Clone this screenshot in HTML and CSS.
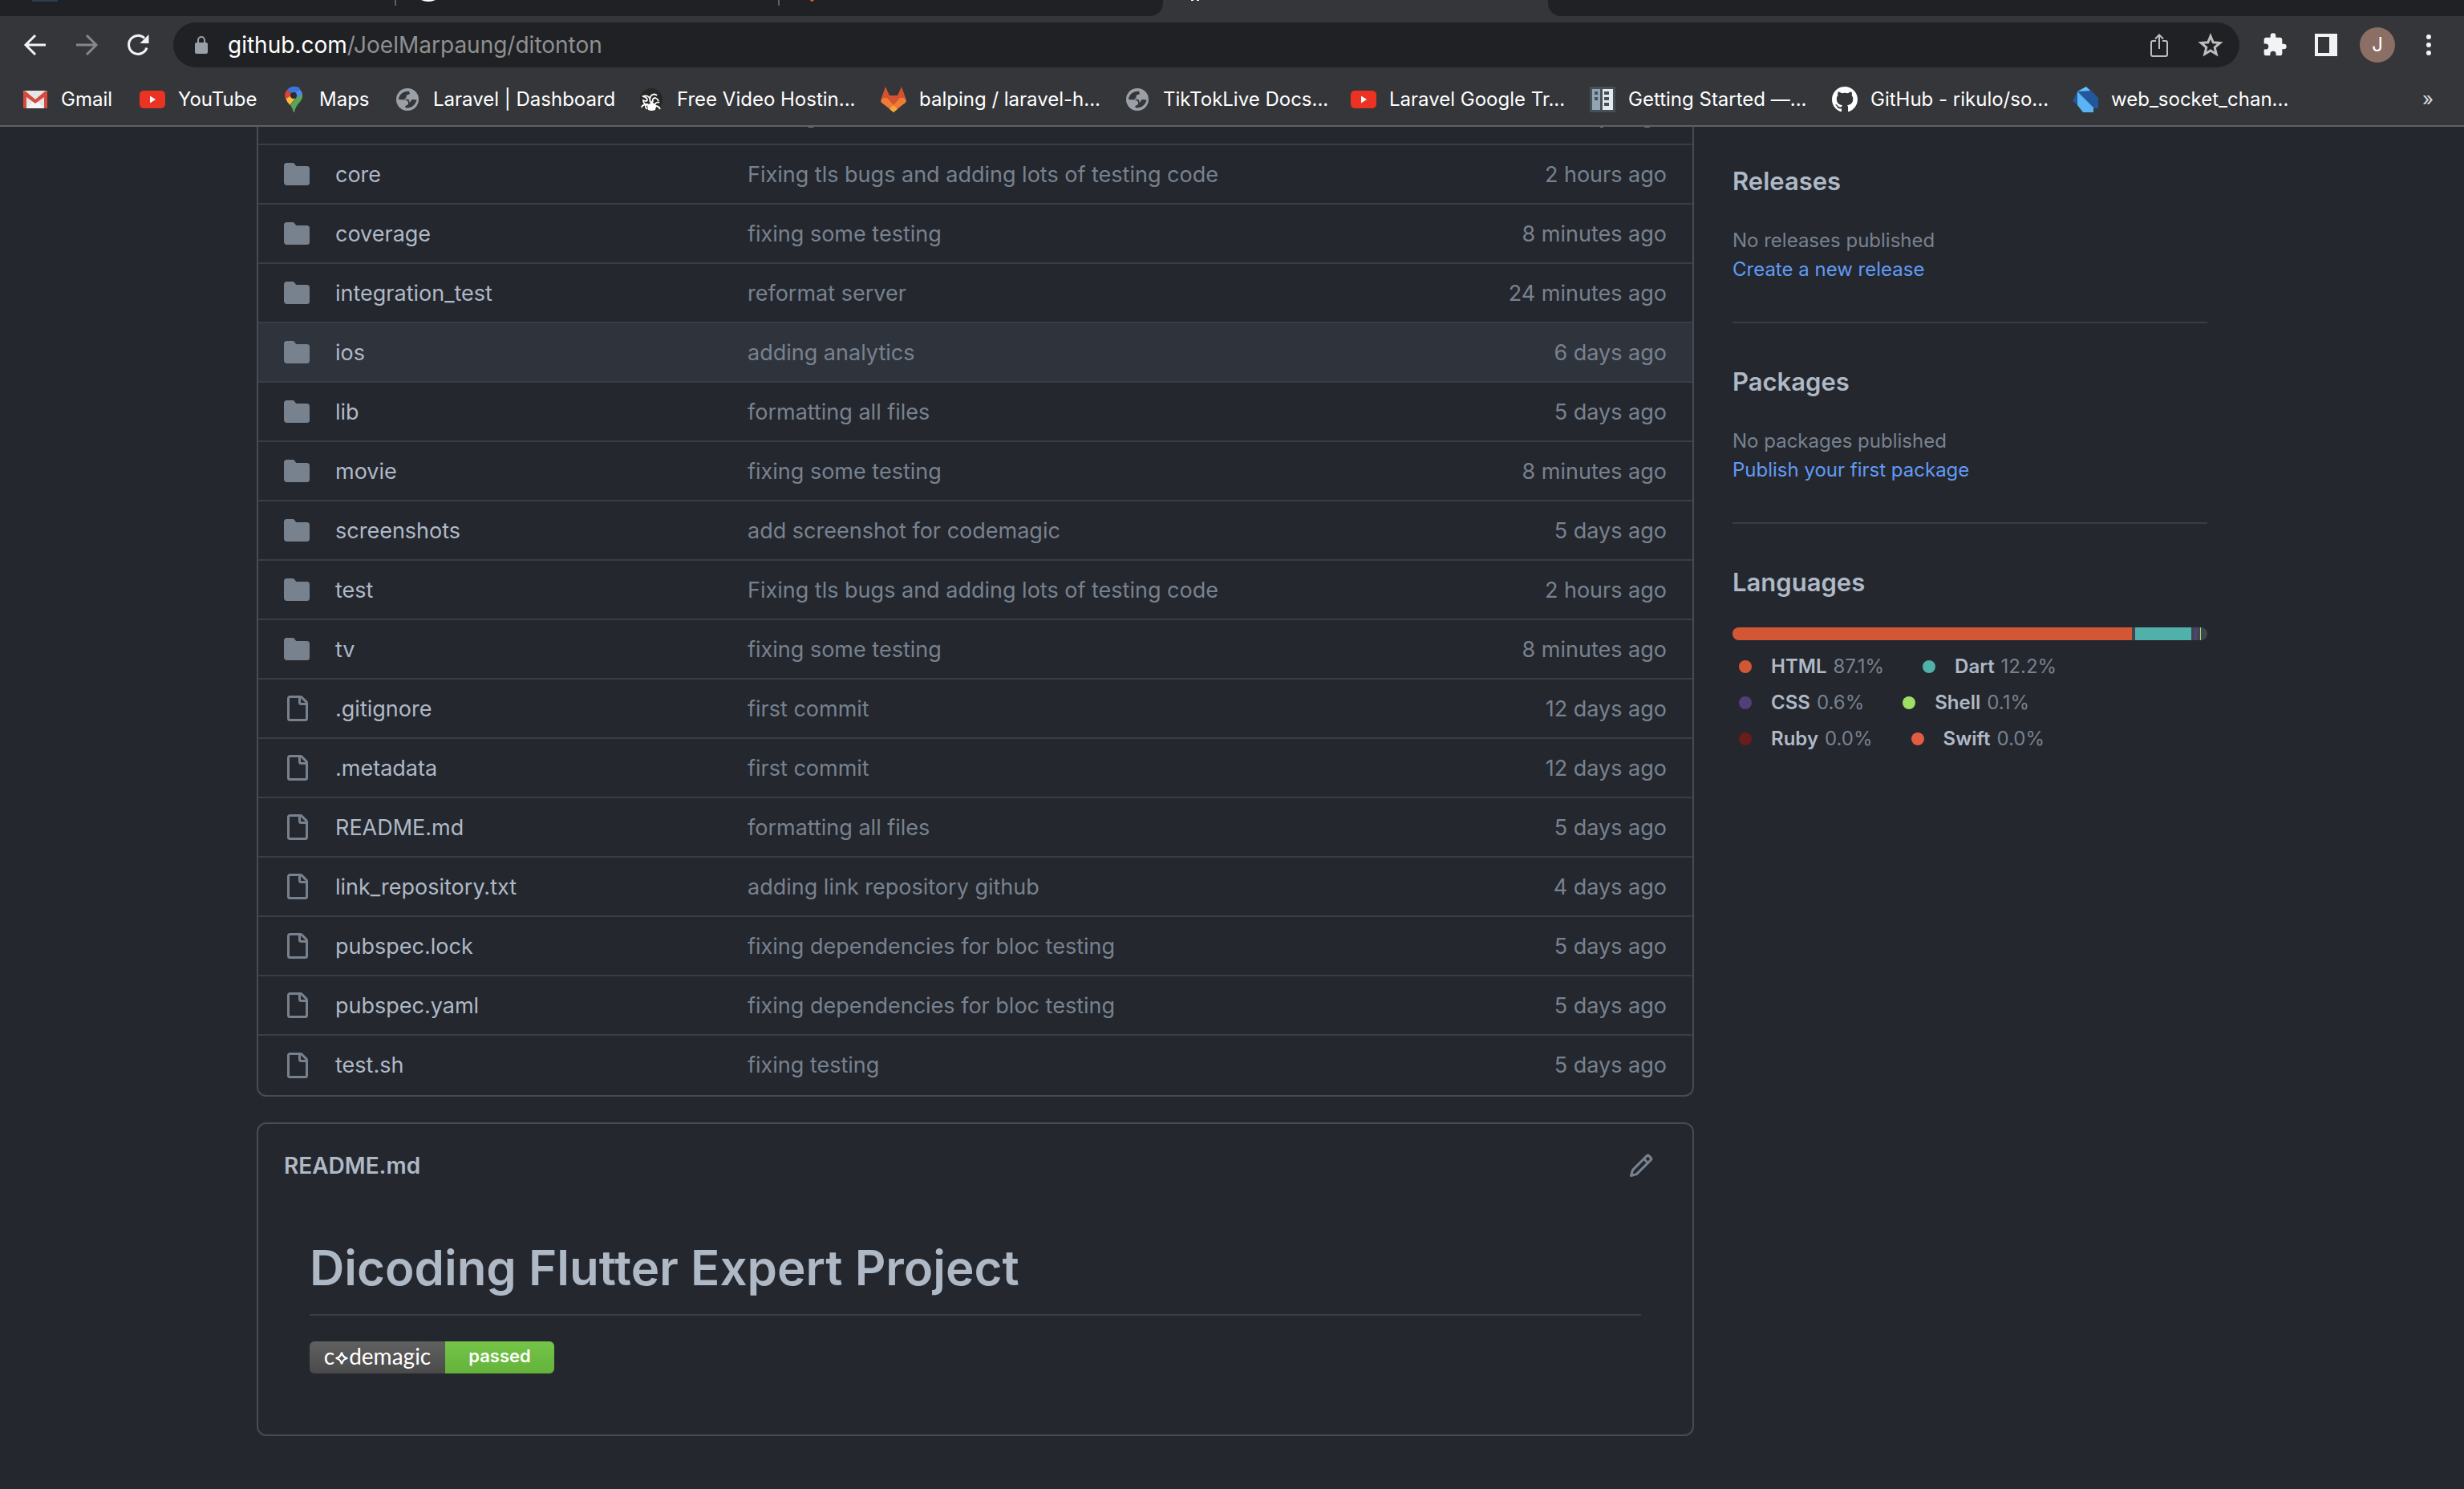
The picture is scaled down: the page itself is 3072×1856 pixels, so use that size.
FILE: index.html
```html
<!DOCTYPE html>
<html lang="en">
<head>
<meta charset="utf-8">
<title>JoelMarpaung/ditonton</title>
<link rel="stylesheet" href="styles.css">
</head>
<body>
<svg class="sprite" aria-hidden="true">
  <symbol id="folder" viewBox="0 0 16 16"><path d="M1.75 1A1.75 1.75 0 000 2.75v10.5C0 14.216.784 15 1.75 15h12.5A1.75 1.75 0 0016 13.25v-8.5A1.75 1.75 0 0014.25 3h-6.5a.25.25 0 01-.2-.1l-.9-1.2c-.33-.44-.85-.7-1.4-.7h-3.5z"/></symbol>
  <symbol id="file" viewBox="0 0 16 16"><path fill-rule="evenodd" d="M2 1.75C2 .784 2.784 0 3.75 0h6.586c.464 0 .909.184 1.237.513l2.914 2.914c.329.328.513.773.513 1.237v9.586A1.75 1.75 0 0113.25 16h-9.5A1.75 1.75 0 012 14.25V1.75zm1.75-.25a.25.25 0 00-.25.25v12.5c0 .138.112.25.25.25h9.5a.25.25 0 00.25-.25V6h-2.75A1.75 1.75 0 019 4.25V1.5H3.75zm6.75.062V4.25c0 .138.112.25.25.25h2.688a.252.252 0 00-.011-.013l-2.914-2.914a.272.272 0 00-.013-.011z"/></symbol>
  <symbol id="globe" viewBox="0 0 32 32"><circle cx="16" cy="16" r="14" fill="#9aa0a6"/><path d="M5 16C5.500 10 10 5.500 18 5.800l1 3.200-4.500 2v3l-3 1.500 6 .5 1.500 4 2.500-4 6 .5C26 23 21 27 14 26.500L13 24.500l4-2.500v-3l-3-2.500z" fill="#35363a"/></symbol>
  <symbol id="youtube" viewBox="0 0 32 32"><rect y="5" width="32" height="22" rx="5" fill="#eb3223"/><path d="M13 11.500v9l7-4.500z" fill="#fff"/></symbol>
</svg>

<header class="browser">
  <div class="tabs">
    <div class="tab tab-first"><svg class="favicon" viewBox="0 0 32 6"><path d="M0 0h32v2H0z" fill="#2c3e50"/></svg></div>
    <div class="tab"><svg class="favicon" viewBox="0 0 32 6"><path d="M7 0q9 4 18 0z" fill="#fff"/></svg></div>
    <div class="tab tab-before"><svg class="favicon" viewBox="0 0 32 6"><path d="M14 0q2 4 5 0z" fill="#f05138"/></svg></div>
    <div class="tab tab-active"><svg class="favicon" viewBox="0 0 32 6"><path d="M11 0h3v1h-3zM18 0h3v1h-3z" fill="#fff"/></svg></div>
    <div class="tabs-rest"></div>
  </div>
  <div class="toolbar">
    <button class="tool" aria-label="Back"><svg viewBox="0 0 32 32"><path d="M29 16H5M16 4L4 16l12 12" fill="none" stroke="#f1f3f4" stroke-width="3"/></svg></button>
    <button class="tool" aria-label="Forward"><svg viewBox="0 0 32 32"><path d="M3 16h24M16 4l12 12-12 12" fill="none" stroke="#84868a" stroke-width="3"/></svg></button>
    <button class="tool" aria-label="Reload"><svg viewBox="0 0 32 32"><path d="M27 19.500A11.500 11.500 0 1 1 24 7.500" fill="none" stroke="#f1f3f4" stroke-width="3"/><path d="M29.500 3v11h-11z" fill="#f1f3f4"/></svg></button>
    <div class="omnibox">
      <svg class="lock" viewBox="0 0 18 22"><rect x="1" y="8" width="16" height="14" rx="2" fill="#9aa0a6"/><path d="M5 9V5a4 4 0 0 1 8 0v4" fill="none" stroke="#9aa0a6" stroke-width="2"/></svg>
      <a class="url" href="#"><b>github.com</b>/JoelMarpaung/ditonton</a>
      <button class="tool" aria-label="Share"><svg viewBox="0 0 32 32"><path d="M12 11H8q-2 0-2 2v15q0 2 2 2h16q2 0 2-2V13q0-2-2-2h-4M16 21V4M11 8.500l5-5 5 5" fill="none" stroke="#bdbdbd" stroke-width="2"/></svg></button>
      <button class="tool" aria-label="Bookmark"><svg viewBox="0 0 32 32"><path d="M16 5l3.200 7.800 8.600.7-6.600 5.500 2 8.400-7.200-4.500-7.200 4.500 2-8.400-6.600-5.500 8.600-.7z" fill="none" stroke="#bdbdbd" stroke-width="3"/></svg></button>
    </div>
    <button class="tool" aria-label="Extensions"><svg viewBox="0 0 24 24"><path fill="#f1f3f4" d="M20.500 11H19V7c0-1.100-.9-2-2-2h-4V3.500a2.500 2.500 0 0 0-5 0V5H4c-1.100 0-2 .9-2 2v3.800h1.500a2.700 2.700 0 0 1 0 5.400H2V20c0 1.100.9 2 2 2h3.800v-1.500a2.700 2.700 0 0 1 5.400 0V22H17c1.100 0 2-.9 2-2v-4h1.500a2.500 2.500 0 0 0 0-5z"/></svg></button>
    <button class="tool" aria-label="Side panel"><svg viewBox="0 0 32 32"><path fill-rule="evenodd" fill="#f1f3f4" d="M2 2h28v28H2zM6 6v20h14V6z"/></svg></button>
    <button class="avatar" aria-label="Profile">J</button>
    <button class="tool" aria-label="Menu"><svg viewBox="0 0 32 32"><g fill="#f1f3f4"><circle cx="16" cy="6" r="3"/><circle cx="16" cy="16" r="3"/><circle cx="16" cy="26" r="3"/></g></svg></button>
  </div>
  <nav class="bookmarks">
    <a href="#"><svg viewBox="0 0 32 32"><rect x="1" y="5" width="30" height="22" rx="2" fill="#e6e6e6"/><path d="M5 27l11-11 11 11" fill="#f5f5f5"/><path d="M1 27V7l2-2 13 11L29 5l2 2v20h-4V13L16 21 5 13v14z" fill="#d54b3d"/></svg>Gmail</a>
    <a href="#"><svg><use href="#youtube"/></svg>YouTube</a>
    <a href="#"><svg viewBox="0 0 32 32"><path d="M16 0a11 11 0 0 0-8 4l8 7 8-9a11 11 0 0 0-8-2z" fill="#3a76e0"/><path d="M8 4q-4 5-2.500 10l3 4 7-8z" fill="#db4437"/><path d="M6.500 15q1 4 5 8l8-10-4-3z" fill="#f9bd3b"/><path d="M26.500 8q2 6-2.500 11-6 6-7 13h-1q-1-5-4-9l13-16z" fill="#58a55c"/><path d="M23.500 3q3 3 3.500 6l-8 5-3-4z" fill="#5087ec"/><circle cx="16" cy="11" r="4" fill="#2b2d33"/></svg>Maps</a>
    <a href="#"><svg><use href="#globe"/></svg>Laravel | Dashboard</a>
    <a href="#"><svg viewBox="0 0 32 32"><circle cx="16" cy="16" r="14" fill="#262626"/><path d="M11 28q-4-3-1-6-6 1-6 4M12 23q-6-1-6-6 4 2 5 0 0-4-6-5 8-2 9 3M15 20q-2-5 1-9 4-3 7 0M18 19q-1-5 3-5 3 1 4 4M20 22q4-4 6-2M21 24q4 0 6 4" fill="none" stroke="#fff" stroke-width="1.800"/><path d="M11 24q1-3 4-3l1-4 3 4q3 0 3 4l-1 4q-5 2-9 0z" fill="#fff"/></svg>Free Video Hostin...</a>
    <a href="#"><svg viewBox="0 0 32 32"><path d="M6 0l5 11h10l5-11 5 14-15 17L1 14z" fill="#d5512f"/><path d="M1 14l15 17 15-17q1 4 0 6L16 31 1 20q-1-2 0-6z" fill="#ee7c37"/><path d="M3 14h5l8 9 8-9h5l3 4-16 14L0 18z" fill="#ee7c37"/><path d="M11 28l5-5 5 5-5 4z" fill="#f3a83c"/></svg>balping / laravel-h...</a>
    <a href="#"><svg><use href="#globe"/></svg>TikTokLive Docs...</a>
    <a href="#"><svg><use href="#youtube"/></svg>Laravel Google Tr...</a>
    <a href="#"><svg viewBox="0 0 32 32"><path d="M0 0h32v32H0z" fill="#455058"/><path d="M3 3h10v26H3z" fill="#90a4b4"/><path d="M16 3h13v26H16z" fill="#e6eaed"/><path d="M6 6h4v4H6zM6 13h4v4H6zM18 6h6v4h-6zM18 13h6v4h-6zM18 20h6v4h-6z" fill="#455058"/></svg>Getting Started —...</a>
    <a href="#"><svg viewBox="0 0 16 16"><path fill="#fff" d="M8 0C3.580 0 0 3.580 0 8c0 3.540 2.290 6.530 5.470 7.590.4.070.55-.17.55-.38 0-.19-.01-.82-.01-1.490-2.010.37-2.530-.49-2.690-.94-.09-.23-.48-.94-.82-1.130-.28-.15-.68-.52-.01-.53.63-.01 1.080.58 1.230.82.72 1.210 1.870.87 2.330.66.07-.52.28-.87.51-1.070-1.780-.2-3.640-.89-3.640-3.950 0-.87.31-1.590.82-2.150-.08-.2-.36-1.020.08-2.120 0 0 .67-.21 2.200.82.64-.18 1.320-.27 2-.27s1.360.09 2 .27c1.530-1.040 2.200-.82 2.200-.82.44 1.100.16 1.920.08 2.120.51.56.82 1.270.82 2.150 0 3.070-1.870 3.750-3.650 3.950.29.25.54.73.54 1.480 0 1.070-.01 1.930-.01 2.200 0 .21.15.46.55.38A8.010 8.010 0 0 0 16 8c0-4.420-3.580-8-8-8z"/></svg>GitHub - rikulo/so...</a>
    <a href="#"><svg viewBox="0 0 32 32"><path d="M6 6L17 0l5 4 10 10v13h-6L6 6z" fill="#22589b"/><path d="M6 6v16L0 18z" fill="#22589b"/><path d="M6 6l11-6 5 5z" fill="#66c1f9"/><path d="M6 6l20 20v6H13L6 23z" fill="#5ab3f3"/></svg>web_socket_chan...</a>
    <button class="more" aria-label="More bookmarks">»</button>
  </nav>
</header>

<main class="viewport">
  <div class="layout">
    <div class="content">
      <div class="files">
        <table>
          <colgroup><col class="col-icon"><col class="col-name"><col><col class="col-age"></colgroup>
          <tbody>
            <tr><td><svg><use href="#folder"/></svg></td><td></td><td>adding</td><td>5 days ago</td></tr>
            <tr><td><svg><use href="#folder"/></svg></td><td><a href="#">core</a></td><td>Fixing tls bugs and adding lots of testing code</td><td>2 hours ago</td></tr>
            <tr><td><svg><use href="#folder"/></svg></td><td><a href="#">coverage</a></td><td>fixing some testing</td><td>8 minutes ago</td></tr>
            <tr><td><svg><use href="#folder"/></svg></td><td><a href="#">integration_test</a></td><td>reformat server</td><td>24 minutes ago</td></tr>
            <tr class="hovered"><td><svg><use href="#folder"/></svg></td><td><a href="#">ios</a></td><td>adding analytics</td><td>6 days ago</td></tr>
            <tr><td><svg><use href="#folder"/></svg></td><td><a href="#">lib</a></td><td>formatting all files</td><td>5 days ago</td></tr>
            <tr><td><svg><use href="#folder"/></svg></td><td><a href="#">movie</a></td><td>fixing some testing</td><td>8 minutes ago</td></tr>
            <tr><td><svg><use href="#folder"/></svg></td><td><a href="#">screenshots</a></td><td>add screenshot for codemagic</td><td>5 days ago</td></tr>
            <tr><td><svg><use href="#folder"/></svg></td><td><a href="#">test</a></td><td>Fixing tls bugs and adding lots of testing code</td><td>2 hours ago</td></tr>
            <tr><td><svg><use href="#folder"/></svg></td><td><a href="#">tv</a></td><td>fixing some testing</td><td>8 minutes ago</td></tr>
            <tr><td><svg><use href="#file"/></svg></td><td><a href="#">.gitignore</a></td><td>first commit</td><td>12 days ago</td></tr>
            <tr><td><svg><use href="#file"/></svg></td><td><a href="#">.metadata</a></td><td>first commit</td><td>12 days ago</td></tr>
            <tr><td><svg><use href="#file"/></svg></td><td><a href="#">README.md</a></td><td>formatting all files</td><td>5 days ago</td></tr>
            <tr><td><svg><use href="#file"/></svg></td><td><a href="#">link_repository.txt</a></td><td>adding link repository github</td><td>4 days ago</td></tr>
            <tr><td><svg><use href="#file"/></svg></td><td><a href="#">pubspec.lock</a></td><td>fixing dependencies for bloc testing</td><td>5 days ago</td></tr>
            <tr><td><svg><use href="#file"/></svg></td><td><a href="#">pubspec.yaml</a></td><td>fixing dependencies for bloc testing</td><td>5 days ago</td></tr>
            <tr><td><svg><use href="#file"/></svg></td><td><a href="#">test.sh</a></td><td>fixing testing</td><td>5 days ago</td></tr>
          </tbody>
        </table>
      </div>
      <section class="readme">
        <div class="readme-bar">
          <h2>README.md</h2>
          <button aria-label="Edit this file"><svg viewBox="0 0 16 16"><path fill-rule="evenodd" d="M11.013 1.427a1.75 1.75 0 012.474 0l1.086 1.086a1.75 1.75 0 010 2.474l-8.61 8.61c-.21.21-.47.364-.756.445l-3.251.93a.75.75 0 01-.927-.928l.929-3.25a1.75 1.75 0 01.445-.758l8.61-8.61zm1.414 1.06a.25.25 0 00-.354 0L10.811 3.75l1.439 1.44 1.263-1.263a.25.25 0 000-.354l-1.086-1.086zM11.189 6.25L9.75 4.81l-6.286 6.287a.25.25 0 00-.064.108l-.558 1.953 1.953-.558a.249.249 0 00.108-.064l6.286-6.286z"/></svg></button>
        </div>
        <article>
          <h1>Dicoding Flutter Expert Project</h1>
          <a class="badge" href="#"><span class="badge-name">c<svg viewBox="0 0 16 16"><path d="M8 1.500Q9 7 14.500 8 9 9 8 14.500 7 9 1.500 8 7 7 8 1.500z"/></svg>demagic</span><span class="badge-state">passed</span></a>
        </article>
      </section>
    </div>

    <aside class="sidebar">
      <section>
        <h2>Releases</h2>
        <p>No releases published</p>
        <a href="#">Create a new release</a>
      </section>
      <section>
        <h2>Packages</h2>
        <p>No packages published</p>
        <a href="#">Publish your first package</a>
      </section>
      <section>
        <h2>Languages</h2>
        <div class="bar">
          <span class="html" style="flex-grow: 87.1"></span>
          <span class="dart" style="flex-grow: 12.2"></span>
          <span class="css" style="flex-grow: 0.6"></span>
          <span class="shell" style="flex-grow: 0.1"></span>
          <span class="ruby" style="flex-grow: 0"></span>
          <span class="swift" style="flex-grow: 0"></span>
        </div>
        <ul class="languages">
          <li><i class="html"></i><b>HTML</b> 87.1%</li>
          <li><i class="dart"></i><b>Dart</b> 12.2%</li>
          <li><i class="css"></i><b>CSS</b> 0.6%</li>
          <li><i class="shell"></i><b>Shell</b> 0.1%</li>
          <li><i class="ruby"></i><b>Ruby</b> 0.0%</li>
          <li><i class="swift"></i><b>Swift</b> 0.0%</li>
        </ul>
      </section>
    </aside>
  </div>
</main>
</body>
</html>
```
FILE: styles.css
```css
* { box-sizing: border-box; }

:root {
  --bg: #24272e;
  --text: #afb9c6;
  --muted: #78828f;
  --link: #619bf5;
  --border: #464b54;
  --line: #383e47;
}

body {
  margin: 0;
  min-height: 100vh;
  background: var(--bg);
  color: var(--text);
  font: 28px/40px Inter, "Liberation Sans", sans-serif;
}

a { color: inherit; text-decoration: none; }
button { padding: 0; border: 0; background: none; color: inherit; font: inherit; }
h1, h2, p, ul { margin: 0; padding: 0; font-weight: 400; }
svg { display: block; flex: none; width: 32px; height: 32px; }
.sprite { display: none; }

/* Browser chrome */
.browser {
  height: 158px;
  border-bottom: 2px solid #5f6063;
  background: #35363a;
  color: #fff;
}

.tabs { display: flex; height: 20px; overflow: hidden; }
.tab { flex: none; width: 478px; padding-left: 24px; background: #202124; }
.tab-first { width: 494px; padding-left: 40px; }
.tab-before { border-bottom-right-radius: 16px; }
.tab-active { width: 480px; background: #35363a; }
.tab:not(.tab-active):not(.tab-before) {
  background: linear-gradient(#5f6063, #5f6063) right top / 2px 7px no-repeat #202124;
}
.tabs-rest { flex: 1; background: #202124; border-bottom-left-radius: 16px; }
.favicon { height: 6px; }

.toolbar { display: flex; align-items: center; gap: 32px; height: 72px; padding: 0 28px; }
.tool { flex: none; width: 32px; height: 32px; }
.omnibox {
  flex: 1;
  display: flex;
  align-items: center;
  gap: 32px;
  height: 56px;
  margin: 0 -4px 0 -4px;
  padding: 0 20px 0 26px;
  border-radius: 28px;
  background: #202124;
}
.lock { width: 18px; height: 22px; }
.url { flex: 1; margin-left: -8px; color: #8e9093; }
.url b { color: #fff; font-weight: 400; }
.avatar {
  width: 44px;
  height: 44px;
  margin: 0 -6px;
  border-radius: 50%;
  background: #8b6f65;
  font-size: 24px;
}

.bookmarks {
  display: grid;
  grid-template-columns: 146px 176px 142px 304px 302px 304px 282px 298px 302px 300px 1fr auto;
  align-items: center;
  height: 64px;
  padding: 0 38px 0 28px;
  font-size: 24px;
  white-space: nowrap;
}
.bookmarks a { display: flex; align-items: center; gap: 16px; }
.more { color: #dadce0; }

/* Repository page */
.viewport { overflow: hidden; }
.layout {
  display: grid;
  grid-template-columns: 1fr 592px;
  gap: 48px;
  max-width: 2560px;
  margin: 0 auto;
  padding: 0 64px;
}

/* The page is scrolled part of the way into the first row */
.files {
  margin-top: -53px;
  border: 2px solid var(--border);
  border-top: 0;
  border-radius: 0 0 12px 12px;
}
table { width: 100%; table-layout: fixed; border-spacing: 0; font-size: 27px; }
.col-icon { width: 96px; }
.col-name { width: 514px; }
.col-age { width: 320px; }
td { padding: 17px 0 15px; border-top: 2px solid var(--line); color: var(--muted); }
td:first-child { padding: 16px 0 16px 32px; }
td:last-child { padding-right: 32px; text-align: right; }
td a { color: var(--text); }
tr:last-child td { padding-bottom: 17px; }
td svg, .readme-bar svg { fill: var(--muted); }
.hovered td { background: #2f333b; }

.readme {
  margin: 32px 0 64px;
  border: 2px solid var(--border);
  border-radius: 12px;
}
.readme-bar {
  display: flex;
  justify-content: space-between;
  align-items: center;
  padding: 32px 48px 0 32px;
}
.readme-bar h2 { font-size: 28px; line-height: 40px; font-weight: 600; }
article { padding: 67px 64px 76px; }
h1 {
  margin-bottom: 32px;
  padding-bottom: 17px;
  border-bottom: 2px solid var(--line);
  font-size: 60px;
  line-height: 81px;
  font-weight: 600;
}

.badge {
  display: inline-flex;
  height: 40px;
  border-radius: 6px;
  overflow: hidden;
  vertical-align: top;
  color: #fff;
  font-size: 22px;
  line-height: 37px;
}
.badge-name {
  display: flex;
  justify-content: center;
  width: 169px;
  background: linear-gradient(#606060, #4a4a4a);
  font-family: Lato, sans-serif;
  font-size: 28px;
}
.badge-name svg { width: 18px; height: 18px; margin-top: 12px; fill: none; stroke: #fff; stroke-width: 2; }
.badge-state {
  width: 136px;
  background: linear-gradient(#74c548, #64b23a);
  font-weight: 600;
  text-align: center;
}

.sidebar { padding-top: 44px; font-size: 24px; line-height: 36px; color: var(--muted); }
.sidebar section + section { margin-top: 47px; padding-top: 49px; border-top: 2px solid var(--line); }
.sidebar h2 {
  margin-bottom: 32px;
  color: var(--text);
  font-size: 31px;
  line-height: 48px;
  font-weight: 600;
}
.sidebar a { display: block; color: var(--link); }

.bar {
  display: flex;
  gap: 4px;
  height: 16px;
  border-radius: 8px;
  overflow: hidden;
  background: #40464f;
}
.languages {
  display: flex;
  flex-wrap: wrap;
  gap: 9px 48px;
  margin-top: 15px;
  padding: 0 48px 0 8px;
  list-style: none;
}
.languages li { display: flex; align-items: center; gap: 8px; }
.languages i { width: 16px; height: 16px; margin-right: 16px; border-radius: 50%; }
.languages b { color: var(--text); font-weight: 600; }

.html { background: #d45735; }
.dart { background: #50b0aa; }
.css { background: #523f79; }
.shell { background: #9fdf64; }
.ruby { background: #6a1d1b; }
.swift { background: #e25c42; }
```
